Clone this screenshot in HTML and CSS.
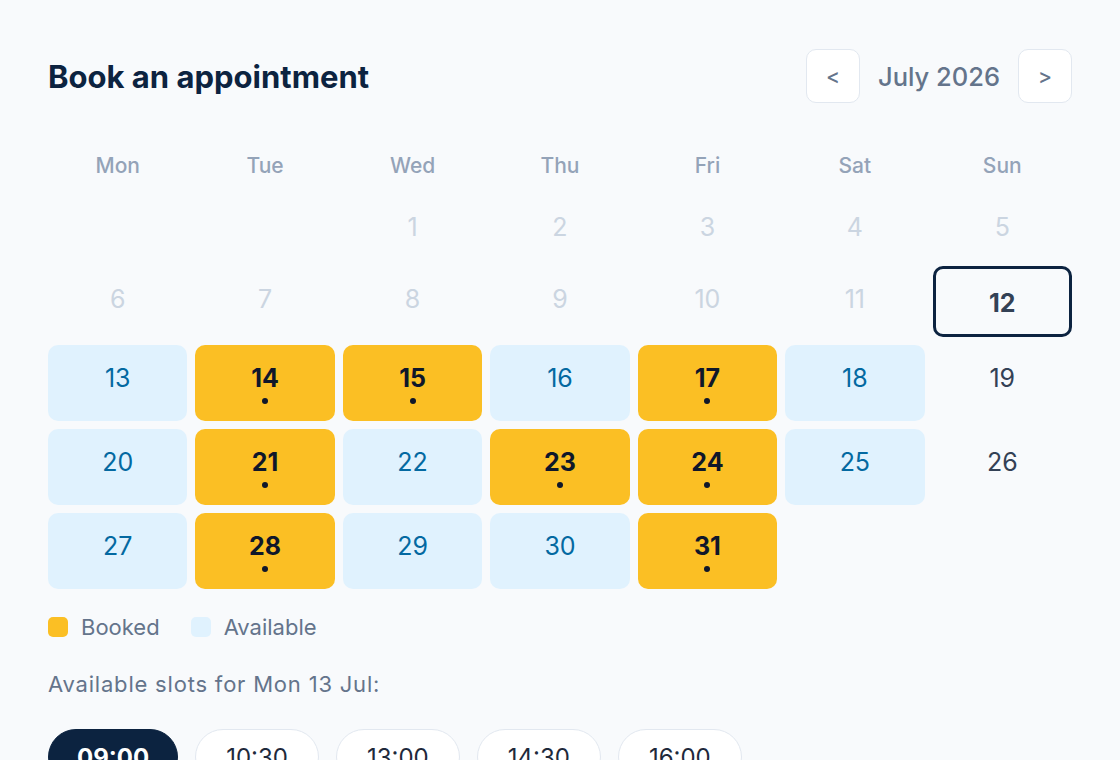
FILE: index.html
```html
<!DOCTYPE html>
<html lang="en">
<head>
    <meta charset="UTF-8">
    <meta name="viewport" content="width=device-width, initial-scale=1.0">
    <title>Book an appointment</title>
    <link rel="stylesheet" href="styles.css">
</head>
<body>
    <div class="booking">
        <div class="header">
            <h1>Book an appointment</h1>
            <div class="month-nav">
                <button class="nav-btn">&lt;</button>
                <span class="month">July 2026</span>
                <button class="nav-btn">&gt;</button>
            </div>
        </div>

        <div class="calendar">
            <div class="weekday">Mon</div>
            <div class="weekday">Tue</div>
            <div class="weekday">Wed</div>
            <div class="weekday">Thu</div>
            <div class="weekday">Fri</div>
            <div class="weekday">Sat</div>
            <div class="weekday">Sun</div>

            <div class="day"></div>
            <div class="day"></div>
            <div class="day past"><span class="num">1</span></div>
            <div class="day past"><span class="num">2</span></div>
            <div class="day past"><span class="num">3</span></div>
            <div class="day past"><span class="num">4</span></div>
            <div class="day past"><span class="num">5</span></div>

            <div class="day past"><span class="num">6</span></div>
            <div class="day past"><span class="num">7</span></div>
            <div class="day past"><span class="num">8</span></div>
            <div class="day past"><span class="num">9</span></div>
            <div class="day past"><span class="num">10</span></div>
            <div class="day past"><span class="num">11</span></div>
            <div class="day today"><span class="num">12</span></div>

            <div class="day available"><span class="num">13</span></div>
            <div class="day booked"><span class="num">14</span><span class="dot"></span></div>
            <div class="day booked"><span class="num">15</span><span class="dot"></span></div>
            <div class="day available"><span class="num">16</span></div>
            <div class="day booked"><span class="num">17</span><span class="dot"></span></div>
            <div class="day available"><span class="num">18</span></div>
            <div class="day"><span class="num">19</span></div>

            <div class="day available"><span class="num">20</span></div>
            <div class="day booked"><span class="num">21</span><span class="dot"></span></div>
            <div class="day available"><span class="num">22</span></div>
            <div class="day booked"><span class="num">23</span><span class="dot"></span></div>
            <div class="day booked"><span class="num">24</span><span class="dot"></span></div>
            <div class="day available"><span class="num">25</span></div>
            <div class="day"><span class="num">26</span></div>

            <div class="day available"><span class="num">27</span></div>
            <div class="day booked"><span class="num">28</span><span class="dot"></span></div>
            <div class="day available"><span class="num">29</span></div>
            <div class="day available"><span class="num">30</span></div>
            <div class="day booked"><span class="num">31</span><span class="dot"></span></div>
        </div>

        <div class="legend">
            <div class="legend-item"><span class="swatch swatch-booked"></span>Booked</div>
            <div class="legend-item"><span class="swatch swatch-available"></span>Available</div>
        </div>

        <p class="slots-label">Available slots for Mon 13 Jul:</p>

        <div class="slots">
            <button class="slot selected">09:00</button>
            <button class="slot">10:30</button>
            <button class="slot">13:00</button>
            <button class="slot">14:30</button>
            <button class="slot">16:00</button>
        </div>
    </div>
</body>
</html>
```

FILE: styles.css
```css
body {
    font-family: Inter, "Noto Sans", sans-serif;
    background-color: #f8fafc;
    margin: 0;
    padding: 0;
}

.booking {
    padding: 49px 48px 0;
}

.header {
    display: flex;
    justify-content: space-between;
    align-items: center;
    height: 54px;
}

.header h1 {
    margin: 0;
    font-size: 31px;
    font-weight: 700;
    color: #0c2340;
}

.month-nav {
    display: flex;
    align-items: center;
    gap: 18px;
}

.nav-btn {
    width: 54px;
    height: 54px;
    background-color: #fff;
    border: 1px solid #e2e8f0;
    border-radius: 10px;
    font-family: inherit;
    font-size: 21px;
    font-weight: 500;
    color: #64748b;
    cursor: pointer;
}

.month {
    font-size: 25.5px;
    font-weight: 500;
    color: #64748b;
}

.calendar {
    display: grid;
    grid-template-columns: repeat(7, 1fr);
    gap: 8px;
    margin-top: 43px;
}

.weekday {
    height: 40px;
    line-height: 40px;
    text-align: center;
    font-size: 21px;
    font-weight: 500;
    color: #94a3b8;
}

.day {
    box-sizing: border-box;
    min-height: 64px;
    padding-top: 17px;
    display: flex;
    flex-direction: column;
    align-items: center;
    border-radius: 10px;
    color: #334155;
}

.num {
    font-size: 25px;
    line-height: 32px;
}

.past {
    color: #cbd5e1;
}

.today {
    min-height: 71px;
    border: 3px solid #0c2340;
    padding-top: 18px;
}

.today .num {
    font-weight: 700;
}

.available {
    background-color: #e0f2fe;
    color: #0369a1;
}

.booked {
    background-color: #fbbf24;
    color: #0f172a;
    min-height: 76px;
}

.booked .num {
    font-weight: 700;
}

.dot {
    width: 6px;
    height: 6px;
    margin-top: 4px;
    border-radius: 50%;
    background-color: #0f172a;
}

.legend {
    display: flex;
    gap: 31px;
    margin-top: 26px;
}

.legend-item {
    display: flex;
    align-items: center;
    gap: 13px;
    font-size: 22px;
    line-height: 24px;
    color: #64748b;
}

.swatch {
    width: 20px;
    height: 20px;
    border-radius: 5px;
}

.swatch-booked {
    background-color: #fbbf24;
}

.swatch-available {
    background-color: #e0f2fe;
}

.slots-label {
    margin: 33px 0 0;
    font-size: 22px;
    line-height: 24px;
    letter-spacing: 0.8px;
    color: #64748b;
}

.slots {
    display: flex;
    gap: 17px;
    margin-top: 33px;
}

.slot {
    height: 56px;
    padding: 0 30px;
    background-color: #fff;
    border: 1px solid #e2e8f0;
    border-radius: 28px;
    font-family: inherit;
    font-size: 24px;
    color: #1e293b;
    cursor: pointer;
}

.slot.selected {
    padding: 0 28px;
    background-color: #0c2340;
    border-color: #0c2340;
    color: #fff;
    font-weight: 700;
}
```
